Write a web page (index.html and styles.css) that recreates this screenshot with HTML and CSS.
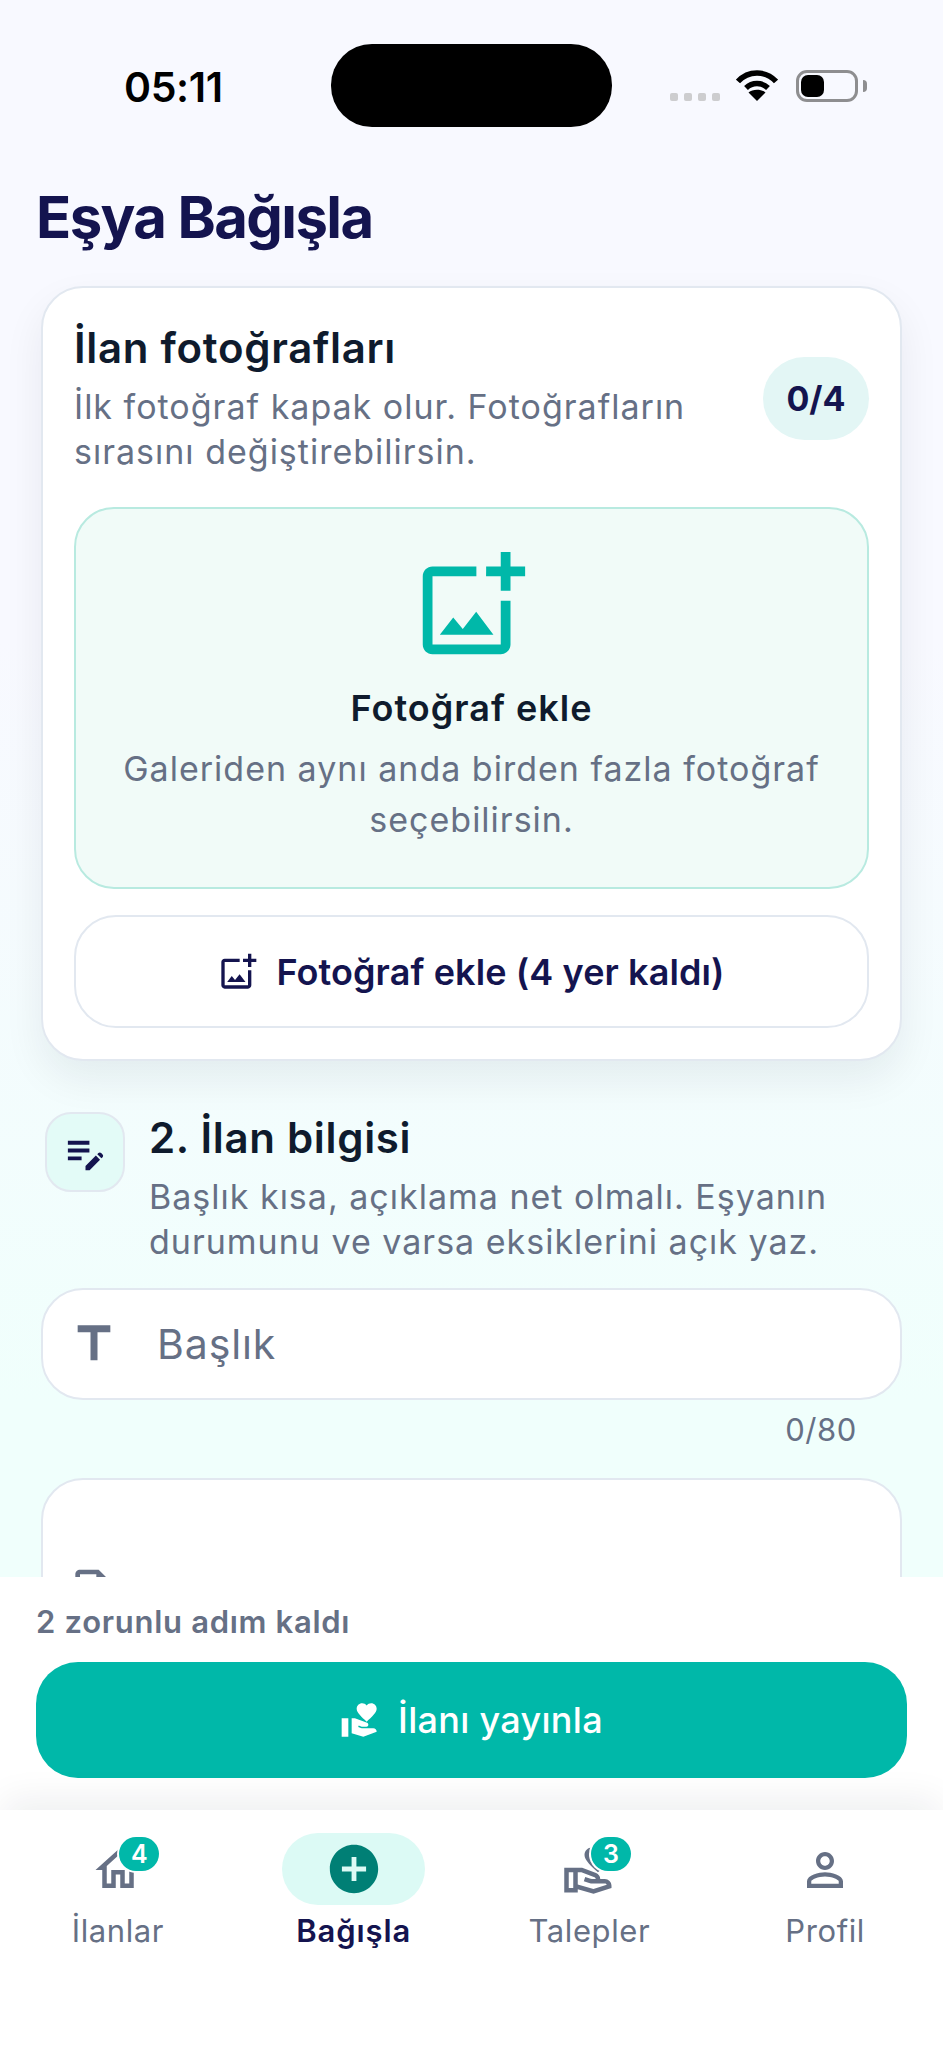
FILE: index.html
```html
<!DOCTYPE html>
<html lang="tr">
<head>
<meta charset="utf-8">
<title>Eşya Bağışla</title>
<link rel="stylesheet" href="styles.css">
</head>
<body>
<div class="screen">
  <main class="content">
    <header class="status">
      <span class="time">05:11</span>
      <span class="island"></span>
      <span class="sys">
        <span class="dots"><i></i><i></i><i></i><i></i></span>
        <svg class="wifi" viewBox="0 0 42 31"><path d="M2 11.5C6.5 6.5 13.5 3 21 3s14.500 3.500 19 8.500" /><path d="M10 18c3-2.900 6.800-4.500 11-4.500s8 1.600 11 4.500" /><path class="fill" d="M21 31l-8.500-8.500c2.200-1.800 5.200-2.800 8.500-2.800s6.300 1 8.500 2.800z"/></svg>
        <span class="battery"><i></i></span>
        <span class="tip"></span>
      </span>
    </header>
    <h1 class="title">Eşya Bağışla</h1>

    <section class="card">
      <div class="card-head">
        <div class="card-head-text">
          <h2 class="heading">İlan fotoğrafları</h2>
          <p class="hint">İlk fotoğraf kapak olur. Fotoğrafların sırasını değiştirebilirsin.</p>
        </div>
        <span class="count">0/4</span>
      </div>
      <div class="drop">
        <svg class="drop-icon" viewBox="0 0 24 24"><path d="M18 20H4V6h9V4H4c-1.100 0-2 .9-2 2v14c0 1.100.9 2 2 2h14c1.100 0 2-.9 2-2v-9h-2v9zm-7.790-3.170l-1.960-2.360L5.500 18h11l-3.540-4.710zM20 4V1h-2v3h-3c.01.01 0 2 0 2h3v2.990c.01.01 2 0 2 0V6h3V4h-3z"/></svg>
        <strong class="drop-title">Fotoğraf ekle</strong>
        <p class="drop-text">Galeriden aynı anda birden fazla fotoğraf seçebilirsin.</p>
      </div>
      <button class="add-btn">
        <svg class="add-icon" viewBox="0 0 24 24"><path d="M18 20H4V6h9V4H4c-1.100 0-2 .9-2 2v14c0 1.100.9 2 2 2h14c1.100 0 2-.9 2-2v-9h-2v9zm-7.790-3.170l-1.960-2.360L5.500 18h11l-3.540-4.710zM20 4V1h-2v3h-3c.01.01 0 2 0 2h3v2.990c.01.01 2 0 2 0V6h3V4h-3z"/></svg>
        <span>Fotoğraf ekle (4 yer kaldı)</span>
      </button>
    </section>

    <section class="info">
      <span class="info-badge">
        <svg viewBox="0 0 24 24"><path d="M3 10h11v2H3zM3 6h11v2H3zM3 14h7v2H3zM18.010 12.870l.59-.59c.39-.39 1.020-.39 1.410 0l.71.71c.39.39.39 1.020 0 1.410l-.59.59zM17.300 13.580l-5.300 5.300V21h2.120l5.300-5.300z"/></svg>
      </span>
      <div class="info-text">
        <h2 class="heading">2. İlan bilgisi</h2>
        <p class="hint">Başlık kısa, açıklama net olmalı. Eşyanın durumunu ve varsa eksiklerini açık yaz.</p>
      </div>
    </section>

    <div class="field">
      <svg class="field-icon" viewBox="0 0 24 24"><path d="M5 4v3h5.500v12h3V7H19V4z"/></svg>
      <span class="placeholder">Başlık</span>
    </div>
    <div class="counter">0/80</div>
    <div class="field field-tall">
      <svg class="field-icon" viewBox="0 0 24 24"><path d="M14 2H6c-1.100 0-2 .9-2 2v16c0 1.100.89 2 1.990 2H18c1.100 0 2-.9 2-2V8l-6-6zm4 18H6V4h7v5h5v11z"/></svg>
    </div>
  </main>

  <section class="publish">
    <p class="remaining">2 zorunlu adım kaldı</p>
    <button class="publish-btn">
      <svg class="publish-icon" viewBox="0 0 24 24"><path d="M1 11h4v11H1zm15-7.750C16.650 2.490 17.660 2 18.700 2 20.550 2 22 3.450 22 5.300c0 2.270-2.910 4.900-6 7.700-3.090-2.810-6-5.440-6-7.700C10 3.450 11.450 2 13.300 2c1.040 0 2.050.49 2.700 1.250zM20 17h-7l-2.090-.73.33-.94L13 16h2.820c.65 0 1.180-.53 1.180-1.180 0-.49-.31-.93-.77-1.110L8.970 11H7v9.020L14 22l8.010-3c-.01-1.100-.9-2-2.010-2z"/></svg>
      <span>İlanı yayınla</span>
    </button>
  </section>

  <nav class="nav">
    <a class="tab">
      <span class="tab-icon">
        <svg viewBox="0 0 24 24"><path d="M12 5.690l5 4.500V18h-2v-6H9v6H7v-7.810l5-4.500M12 3L2 12h3v8h6v-6h2v6h6v-8h3L12 3z"/></svg>
        <b class="badge">4</b>
      </span>
      <span class="tab-label">İlanlar</span>
    </a>
    <a class="tab tab-active">
      <span class="tab-icon">
        <svg viewBox="0 0 24 24"><path d="M12 2C6.480 2 2 6.480 2 12s4.480 10 10 10 10-4.480 10-10S17.520 2 12 2zm5 11h-4v4h-2v-4H7v-2h4V7h2v4h4v2z"/></svg>
      </span>
      <span class="tab-label">Bağışla</span>
    </a>
    <a class="tab">
      <span class="tab-icon">
        <svg viewBox="0 0 24 24"><path d="M16 13c3.090-2.810 6-5.440 6-7.700C22 3.450 20.550 2 18.700 2c-1.040 0-2.050.49-2.700 1.250C15.340 2.490 14.340 2 13.300 2 11.450 2 10 3.450 10 5.300c0 2.260 2.910 4.890 6 7.700zm-2.700-9c.44 0 .89.21 1.180.55L16 6l1.520-1.450c.29-.34.74-.55 1.180-.55.74 0 1.300.56 1.300 1.300 0 1.120-2.040 3.170-4 4.990-1.960-1.820-4-3.870-4-4.990 0-.74.56-1.300 1.300-1.300zM19 16h-2c0-1.200-.75-2.280-1.870-2.700L8.970 11H1v11h6v-1.440l7 1.940 8-2.500v-1c0-1.660-1.340-3-3-3zM3 20v-7h2v7H3zm10.970.41L7 18.480V13h1.610l5.820 2.170c.34.13.57.46.57.83 0 0-2-.05-2.300-.15l-2.380-.79-.63 1.900 2.380.79c.51.17 1.040.25 1.580.25H19c.39 0 .74.23.9.56l-5.930 1.850z"/></svg>
        <b class="badge">3</b>
      </span>
      <span class="tab-label">Talepler</span>
    </a>
    <a class="tab">
      <span class="tab-icon">
        <svg viewBox="0 0 24 24"><path d="M12 5.900c1.160 0 2.100.94 2.100 2.100s-.94 2.100-2.100 2.100S9.900 9.160 9.900 8s.94-2.100 2.100-2.100m0 9c2.970 0 6.100 1.460 6.100 2.100v1.100H5.900V17c0-.64 3.130-2.100 6.100-2.100M12 4C9.790 4 8 5.790 8 8s1.790 4 4 4 4-1.790 4-4-1.790-4-4-4zm0 9c-2.670 0-8 1.340-8 4v3h16v-3c0-2.660-5.330-4-8-4z"/></svg>
      </span>
      <span class="tab-label">Profil</span>
    </a>
  </nav>
</div>
</body>
</html>
```
FILE: styles.css
```css
* { box-sizing: border-box; }
html, body { margin: 0; padding: 0; }
body { font-family: Inter, "Noto Sans", sans-serif; color: #0f1b2d; }
h1, h2, p { margin: 0; }
button { font: inherit; cursor: pointer; }

.screen {
  width: 943px;
  height: 2048px;
  display: flex;
  flex-direction: column;
  overflow: hidden;
  background: #fff;
}
.content {
  flex: 1;
  min-height: 0;
  overflow: hidden;
  padding: 0 41px;
  background: linear-gradient(180deg, #f8f9ff 0, #f8f9ff 640px, #f0fffc 1400px);
}

/* status bar */
.status {
  height: 180px;
  margin: 0 -41px;
  padding-top: 44px;
  display: flex;
  align-items: flex-start;
  position: relative;
}
.time {
  width: 331px;
  padding: 20px 0 0 124px;
  font-size: 41px;
  line-height: 46px;
  font-weight: 600;
  color: #000;
  letter-spacing: -0.4px;
}
.island {
  width: 281px;
  height: 83px;
  border-radius: 41px;
  background: #000;
}
.sys {
  display: flex;
  align-items: flex-start;
  padding: 26px 0 0 58px;
}
.dots { display: flex; gap: 6px; margin: 23px 16px 0 0; }
.dots i { width: 8px; height: 8px; border-radius: 2px; background: #cdcdcf; }
.wifi { width: 42px; height: 31px; margin-right: 18px; }
.wifi path { fill: none; stroke: #000; stroke-width: 5.500; }
.wifi path.fill { fill: #000; stroke: none; }
.battery {
  width: 62px;
  height: 32px;
  border: 3px solid #8e8e90;
  border-radius: 11px;
  padding: 2px;
  display: block;
}
.battery i { display: block; width: 23px; height: 22px; border-radius: 7px; background: #000; }
.tip {
  width: 4px;
  height: 12px;
  margin: 10px 0 0 5px;
  background: #8e8e90;
  border-radius: 0 4px 4px 0;
}

.title {
  margin: 0 0 0 -5px;
  font-size: 58px;
  line-height: 74px;
  font-weight: 700;
  letter-spacing: -1.600px;
  color: #14144f;
}

/* card */
.card {
  margin-top: 32px;
  padding: 35px 31px 31px;
  background: #fff;
  border: 2.500px solid #e2e8f0;
  border-radius: 42px;
  box-shadow: 0 18px 40px rgba(15, 23, 42, 0.07);
}
.card-head { display: flex; align-items: center; gap: 24px; }
.card-head-text { flex: 1; }
.heading {
  font-size: 42px;
  line-height: 50px;
  font-weight: 600;
  letter-spacing: 0.7px;
  color: #0f1b2d;
}
.hint {
  margin-top: 11px;
  font-size: 34px;
  line-height: 45px;
  letter-spacing: 1px;
  color: #667085;
}
.count {
  width: 106px;
  height: 83px;
  border-radius: 42px;
  background: #e3f6f5;
  color: #14144f;
  font-size: 34px;
  font-weight: 700;
  display: flex;
  align-items: center;
  justify-content: center;
}
.drop {
  margin-top: 33px;
  height: 382px;
  padding: 38px 40px 0;
  background: #f1fbf8;
  border: 2.500px solid #b8eae0;
  border-radius: 40px;
  display: flex;
  flex-direction: column;
  align-items: center;
  text-align: center;
}
.drop-icon { width: 117px; height: 117px; fill: #00b8a9; flex: none; }
.drop-title {
  margin-top: 22px;
  font-size: 36px;
  line-height: 44px;
  font-weight: 600;
  letter-spacing: 1px;
  color: #0f1b2d;
}
.drop-text {
  margin-top: 13px;
  font-size: 34px;
  line-height: 51px;
  letter-spacing: 1px;
  color: #667085;
}
.add-btn {
  width: 100%;
  height: 113px;
  margin-top: 26px;
  background: #fff;
  border: 2.500px solid #e2e8f0;
  border-radius: 42px;
  color: #14144f;
  font-size: 36px;
  font-weight: 600;
  letter-spacing: 0.1px;
  display: flex;
  align-items: center;
  justify-content: center;
  gap: 18px;
}
.add-icon { width: 40px; height: 40px; fill: #14144f; }

/* info */
.info { display: flex; align-items: flex-start; gap: 24px; margin: 44px 0 0 4px; }
.info-badge {
  width: 80px;
  height: 80px;
  margin-top: 7px;
  border: 2.500px solid #e2e8f0;
  border-radius: 26px;
  background: #e3fbf7;
  display: flex;
  align-items: center;
  justify-content: center;
  flex: none;
}
.info-badge svg { width: 47px; height: 47px; fill: #14144f; }
.info-text { flex: 1; padding-top: 8px; }

/* fields */
.field {
  height: 112px;
  margin-top: 24px;
  padding-left: 23px;
  background: #fff;
  border: 2.500px solid #e2e8f0;
  border-radius: 42px;
  display: flex;
  align-items: center;
  gap: 35px;
}
.field-icon { width: 56px; height: 56px; fill: #667085; flex: none; }
.placeholder { font-size: 41px; letter-spacing: 0.9px; color: #667085; }
.counter {
  margin-top: 12px;
  padding-right: 45px;
  text-align: right;
  font-size: 31px;
  line-height: 36px;
  letter-spacing: 0.6px;
  color: #667085;
}
.field-tall { height: 400px; margin-top: 30px; align-items: flex-start; padding-top: 85px; }

/* publish */
.publish {
  height: 233px;
  padding: 26px 36px 0;
  background: #fff;
  flex: none;
}
.remaining {
  font-size: 31px;
  line-height: 38px;
  font-weight: 600;
  letter-spacing: 0.7px;
  color: #667085;
}
.publish-btn {
  width: 871px;
  height: 116px;
  margin-top: 21px;
  border: 0;
  border-radius: 42px;
  background: #00b8a9;
  color: #fff;
  font-size: 36px;
  font-weight: 500;
  letter-spacing: 0.3px;
  display: flex;
  align-items: center;
  justify-content: center;
  gap: 18px;
}
.publish-icon { width: 40px; height: 40px; fill: #fff; }

/* nav */
.nav {
  height: 238px;
  flex: none;
  display: grid;
  grid-template-columns: repeat(4, 1fr);
  padding-top: 23px;
  background: #fff;
  position: relative;
  box-shadow: 0 -14px 34px -4px rgba(15, 23, 42, 0.07);
}
.tab { display: flex; flex-direction: column; align-items: center; color: #667085; }
.tab-icon {
  width: 143px;
  height: 72px;
  border-radius: 36px;
  display: flex;
  align-items: center;
  justify-content: center;
  position: relative;
}
.tab-icon svg { width: 54px; height: 54px; fill: #667085; margin-top: 2px; }
.tab-label {
  margin-top: 6px;
  font-size: 31px;
  line-height: 40px;
  letter-spacing: 0.6px;
}
.tab-active { color: #14144f; }
.tab-active .tab-label { font-weight: 600; letter-spacing: 0.9px; }
.tab-active .tab-icon { background: #dcfaf5; }
.tab-active .tab-icon svg { width: 58px; height: 58px; fill: #007f75; margin-top: 0; }
.badge {
  position: absolute;
  top: 4px;
  left: 73px;
  width: 40px;
  height: 34px;
  border-radius: 17px;
  background: #00b8a9;
  box-shadow: 0 0 0 2px #fff;
  color: #fff;
  font-size: 25px;
  font-weight: 600;
  display: flex;
  align-items: center;
  justify-content: center;
}
```
